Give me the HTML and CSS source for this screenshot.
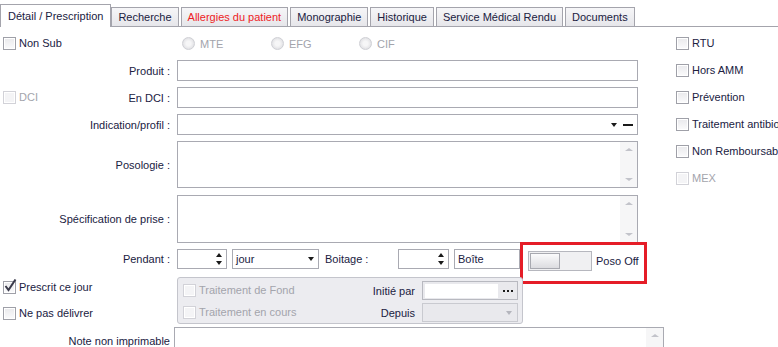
FILE: index.html
```html
<!DOCTYPE html>
<html lang="fr">
<head>
    <meta charset="UTF-8">
    <title>Détail / Prescription</title>
    <link rel="stylesheet" href="styles.css">
</head>
<body>
    <div class="tabs">
        <div class="tab active">Détail / Prescription</div>
        <div class="tab">Recherche</div>
        <div class="tab alert">Allergies du patient</div>
        <div class="tab">Monographie</div>
        <div class="tab">Historique</div>
        <div class="tab">Service Médical Rendu</div>
        <div class="tab">Documents</div>
    </div>

    <div class="content">
        <div class="main">
            <div class="row top">
                <div class="lab split">
                    <span class="chk"><i class="box"></i>Non Sub</span>
                </div>
                <div class="radios">
                    <span class="radio"><i></i>MTE</span>
                    <span class="radio"><i></i>EFG</span>
                    <span class="radio"><i></i>CIF</span>
                </div>
            </div>

            <div class="row">
                <div class="lab">Produit :</div>
                <div class="field"></div>
            </div>

            <div class="row">
                <div class="lab split">
                    <span class="chk off"><i class="box"></i>DCI</span>
                    <span>En DCI :</span>
                </div>
                <div class="field"></div>
            </div>

            <div class="row">
                <div class="lab">Indication/profil :</div>
                <div class="field drop">
                    <span class="arrow"></span>
                    <span class="dash"></span>
                </div>
            </div>

            <div class="row">
                <div class="lab">Posologie :</div>
                <div class="field area poso">
                    <div class="scroll"><span class="up"></span><span class="down"></span></div>
                </div>
            </div>

            <div class="row gap7">
                <div class="lab">Spécification de prise :</div>
                <div class="field area spec">
                    <div class="scroll"><span class="up"></span><span class="down"></span></div>
                </div>
            </div>

            <div class="row">
                <div class="lab">Pendant :</div>
                <div class="line">
                    <div class="field spin">
                        <div class="spin-btns"><span class="arrow-up"></span><span class="arrow"></span></div>
                    </div>
                    <div class="field combo jour">jour<span class="arrow"></span></div>
                    <div class="inline-lab">Boitage :</div>
                    <div class="field spin wide">
                        <div class="spin-btns"><span class="arrow-up"></span><span class="arrow"></span></div>
                    </div>
                    <div class="field combo boite">Boîte</div>
                    <div class="highlight">
                        <div class="toggle"><span class="thumb"></span></div>
                        <span>Poso Off</span>
                    </div>
                </div>
            </div>

            <div class="row gap8">
                <div class="lab stack">
                    <span class="chk"><i class="box checked"><svg width="15" height="15" viewBox="0 0 15 15"><path d="M2.5 7 L5.5 11 L12.5 0.5" fill="none" stroke="#3a3a4a" stroke-width="2"/></svg></i>Prescrit ce jour</span>
                    <span class="chk"><i class="box"></i>Ne pas délivrer</span>
                </div>
                <div class="group">
                    <span class="chk off"><i class="box"></i>Traitement de Fond</span>
                    <span class="g-lab">Initié par</span>
                    <div class="pick"><span class="pick-in"></span><span class="dots"><b></b><b></b><b></b></span></div>
                    <span class="chk off"><i class="box"></i>Traitement en cours</span>
                    <span class="g-lab">Depuis</span>
                    <div class="pick off"><span class="arrow light"></span></div>
                </div>
            </div>

            <div class="row note-row">
                <div class="lab note-lab">Note non imprimable</div>
                <div class="field area note">
                    <div class="scroll"><span class="up"></span></div>
                </div>
            </div>
        </div>

        <div class="side">
            <span class="chk"><i class="box"></i>RTU</span>
            <span class="chk"><i class="box"></i>Hors AMM</span>
            <span class="chk"><i class="box"></i>Prévention</span>
            <span class="chk"><i class="box"></i>Traitement antibiotique</span>
            <span class="chk"><i class="box"></i>Non Remboursable</span>
            <span class="chk off"><i class="box"></i>MEX</span>
        </div>
    </div>
</body>
</html>
```

FILE: styles.css
```css
body {
    margin: 0;
    width: 778px;
    height: 347px;
    overflow: hidden;
    font-family: "Liberation Sans", Arial, sans-serif;
    font-size: 11px;
    color: #20213f;
    background: #fff;
}

/* tabs */
.tabs {
    display: flex;
    align-items: flex-end;
    height: 26px;
    border-bottom: 1px solid #a4a4ac;
}
.tab {
    height: 19px;
    line-height: 18px;
    padding: 0 6px;
    margin-left: 2px;
    box-sizing: border-box;
    border: 1px solid #a4a4ac;
    border-bottom: none;
    background: linear-gradient(#f6f6f8, #e6e6ea);
    white-space: nowrap;
}
.tab.active {
    height: 23px;
    line-height: 23px;
    margin: 0 0 -1px 0;
    padding: 0 7px;
    background: #fff;
}
.tab.active + .tab {
    margin-left: 0;
}
.tab.alert {
    color: #ee1c25;
}

/* layout */
.content {
    display: flex;
    padding-top: 6px;
}
.main {
    width: 676px;
    flex: none;
}
.row {
    display: flex;
    align-items: center;
    gap: 7px;
    margin-top: 6px;
}
.row.top {
    margin-top: 0;
    height: 21px;
}
.row.gap7 {
    margin-top: 7px;
}
.row.gap8 {
    margin-top: 8px;
}
.lab {
    width: 170px;
    flex: none;
    text-align: right;
    white-space: nowrap;
}
.lab.split {
    display: flex;
    justify-content: space-between;
    align-items: center;
    text-align: left;
    padding-left: 3px;
    box-sizing: border-box;
}
.lab.stack {
    display: flex;
    flex-direction: column;
    gap: 13px;
    padding-left: 3px;
    box-sizing: border-box;
}

/* checkboxes & radios */
.chk {
    display: flex;
    align-items: center;
    gap: 3px;
    line-height: 13px;
    white-space: nowrap;
}
.box {
    position: relative;
    width: 13px;
    height: 13px;
    flex: none;
    box-sizing: border-box;
    border: 1px solid #9fa0a8;
    background: linear-gradient(#e9e9ec, #fbfbfc);
    box-shadow: inset 0 0 0 1px #fff;
}
.box svg {
    position: absolute;
    left: -1px;
    top: -3px;
}
.chk.off {
    color: #a3a4ac;
}
.chk.off .box {
    border-color: #d2d2d8;
    background: #f4f4f6;
}
.radios {
    display: grid;
    grid-template-columns: 89px 88px 89px;
    padding-left: 5px;
}
.radio {
    display: flex;
    align-items: center;
    gap: 5px;
    color: #a3a4ac;
}
.radio i {
    width: 13px;
    height: 13px;
    box-sizing: border-box;
    border-radius: 50%;
    border: 1px solid #cfd0d5;
    background: radial-gradient(circle, #f6f6f7 30%, #dcdce0 85%);
}

/* fields */
.field {
    width: 461px;
    height: 21px;
    box-sizing: border-box;
    border: 1px solid #a9aab2;
    background: #fff;
}
.drop {
    display: flex;
    align-items: center;
    justify-content: flex-end;
    gap: 6px;
    padding-right: 4px;
}
.arrow {
    width: 0;
    height: 0;
    border-left: 3.5px solid transparent;
    border-right: 3.5px solid transparent;
    border-top: 4px solid #1a1a1a;
}
.arrow.light {
    border-top-color: #b4b5bd;
}
.arrow-up {
    width: 0;
    height: 0;
    border-left: 3px solid transparent;
    border-right: 3px solid transparent;
    border-bottom: 4px solid #1a1a1a;
}
.dash {
    width: 10px;
    height: 2px;
    background: #1a1a1a;
}
.area {
    display: flex;
    justify-content: flex-end;
}
.poso {
    height: 47px;
}
.spec {
    height: 48px;
}
.scroll {
    width: 17px;
    background: #f6f6f7;
    display: flex;
    flex-direction: column;
    justify-content: space-between;
    align-items: center;
    padding: 6px 0;
    box-sizing: border-box;
}
.up {
    width: 0;
    height: 0;
    border-left: 4px solid transparent;
    border-right: 4px solid transparent;
    border-bottom: 3px solid #c2c3ca;
}
.down {
    width: 0;
    height: 0;
    border-left: 4px solid transparent;
    border-right: 4px solid transparent;
    border-top: 3px solid #c2c3ca;
}

/* pendant row */
.line {
    display: flex;
    align-items: center;
    gap: 5px;
}
.line .field {
    height: 20px;
}
.spin {
    width: 50px;
    display: flex;
    justify-content: flex-end;
    align-items: center;
    padding-right: 4px;
}
.spin.wide {
    width: 51px;
}
.spin-btns {
    display: flex;
    flex-direction: column;
    gap: 4px;
}
.combo {
    display: flex;
    align-items: center;
    justify-content: space-between;
    padding: 0 4px 0 3px;
    line-height: 18px;
}
.jour {
    width: 87px;
}
.boite {
    width: 66px;
}
.inline-lab {
    width: 68px;
    margin-left: 1px;
    flex: none;
}
.highlight {
    display: flex;
    align-items: center;
    gap: 4px;
    align-self: flex-start;
    margin: -7px 0 -16px -5px;
    padding: 6px 5px 10px 5px;
    border: 3px solid #e51d27;
    white-space: nowrap;
}
.toggle {
    width: 64px;
    height: 20px;
    box-sizing: border-box;
    border: 1px solid #b6b7be;
    background: #f0f0f2;
    padding: 1px 0 0 1px;
}
.thumb {
    display: block;
    width: 30px;
    height: 16px;
    box-sizing: border-box;
    border: 1px solid #a8a9b0;
    background: linear-gradient(#fbfbfc, #dcdce0);
}

/* group box */
.group {
    width: 346px;
    height: 47px;
    box-sizing: border-box;
    border: 1px solid #c4c5cc;
    border-radius: 3px;
    background: #ececf0;
    padding: 3px 4px 1px 5px;
    display: grid;
    grid-template-columns: 1fr auto 96px;
    grid-auto-rows: 19px;
    column-gap: 7px;
    row-gap: 3px;
    align-items: center;
}
.g-lab {
    text-align: right;
}
.pick {
    height: 19px;
    box-sizing: border-box;
    border: 1px solid #b8b9c0;
    background: #e9e9ed;
    display: flex;
    align-items: center;
    justify-content: space-between;
    padding: 0 4px 0 2px;
}
.pick.off {
    border-color: #c9cad0;
    justify-content: flex-end;
    padding-right: 5px;
}
.pick-in {
    width: 73px;
    height: 14px;
    background: #fff;
}
.dots {
    display: flex;
    gap: 2px;
}
.dots b {
    width: 2px;
    height: 2px;
    background: #1a1a1a;
}

/* note */
.row.note-row {
    margin-top: 3px;
    align-items: flex-start;
    gap: 4px;
}
.note-lab {
    padding-top: 8px;
    line-height: 13px;
}
.note {
    width: 490px;
    height: 40px;
}
.note .scroll {
    justify-content: flex-start;
}

/* right column */
.side {
    display: flex;
    flex-direction: column;
    gap: 14px;
    padding-top: 4px;
    overflow: hidden;
}
```
